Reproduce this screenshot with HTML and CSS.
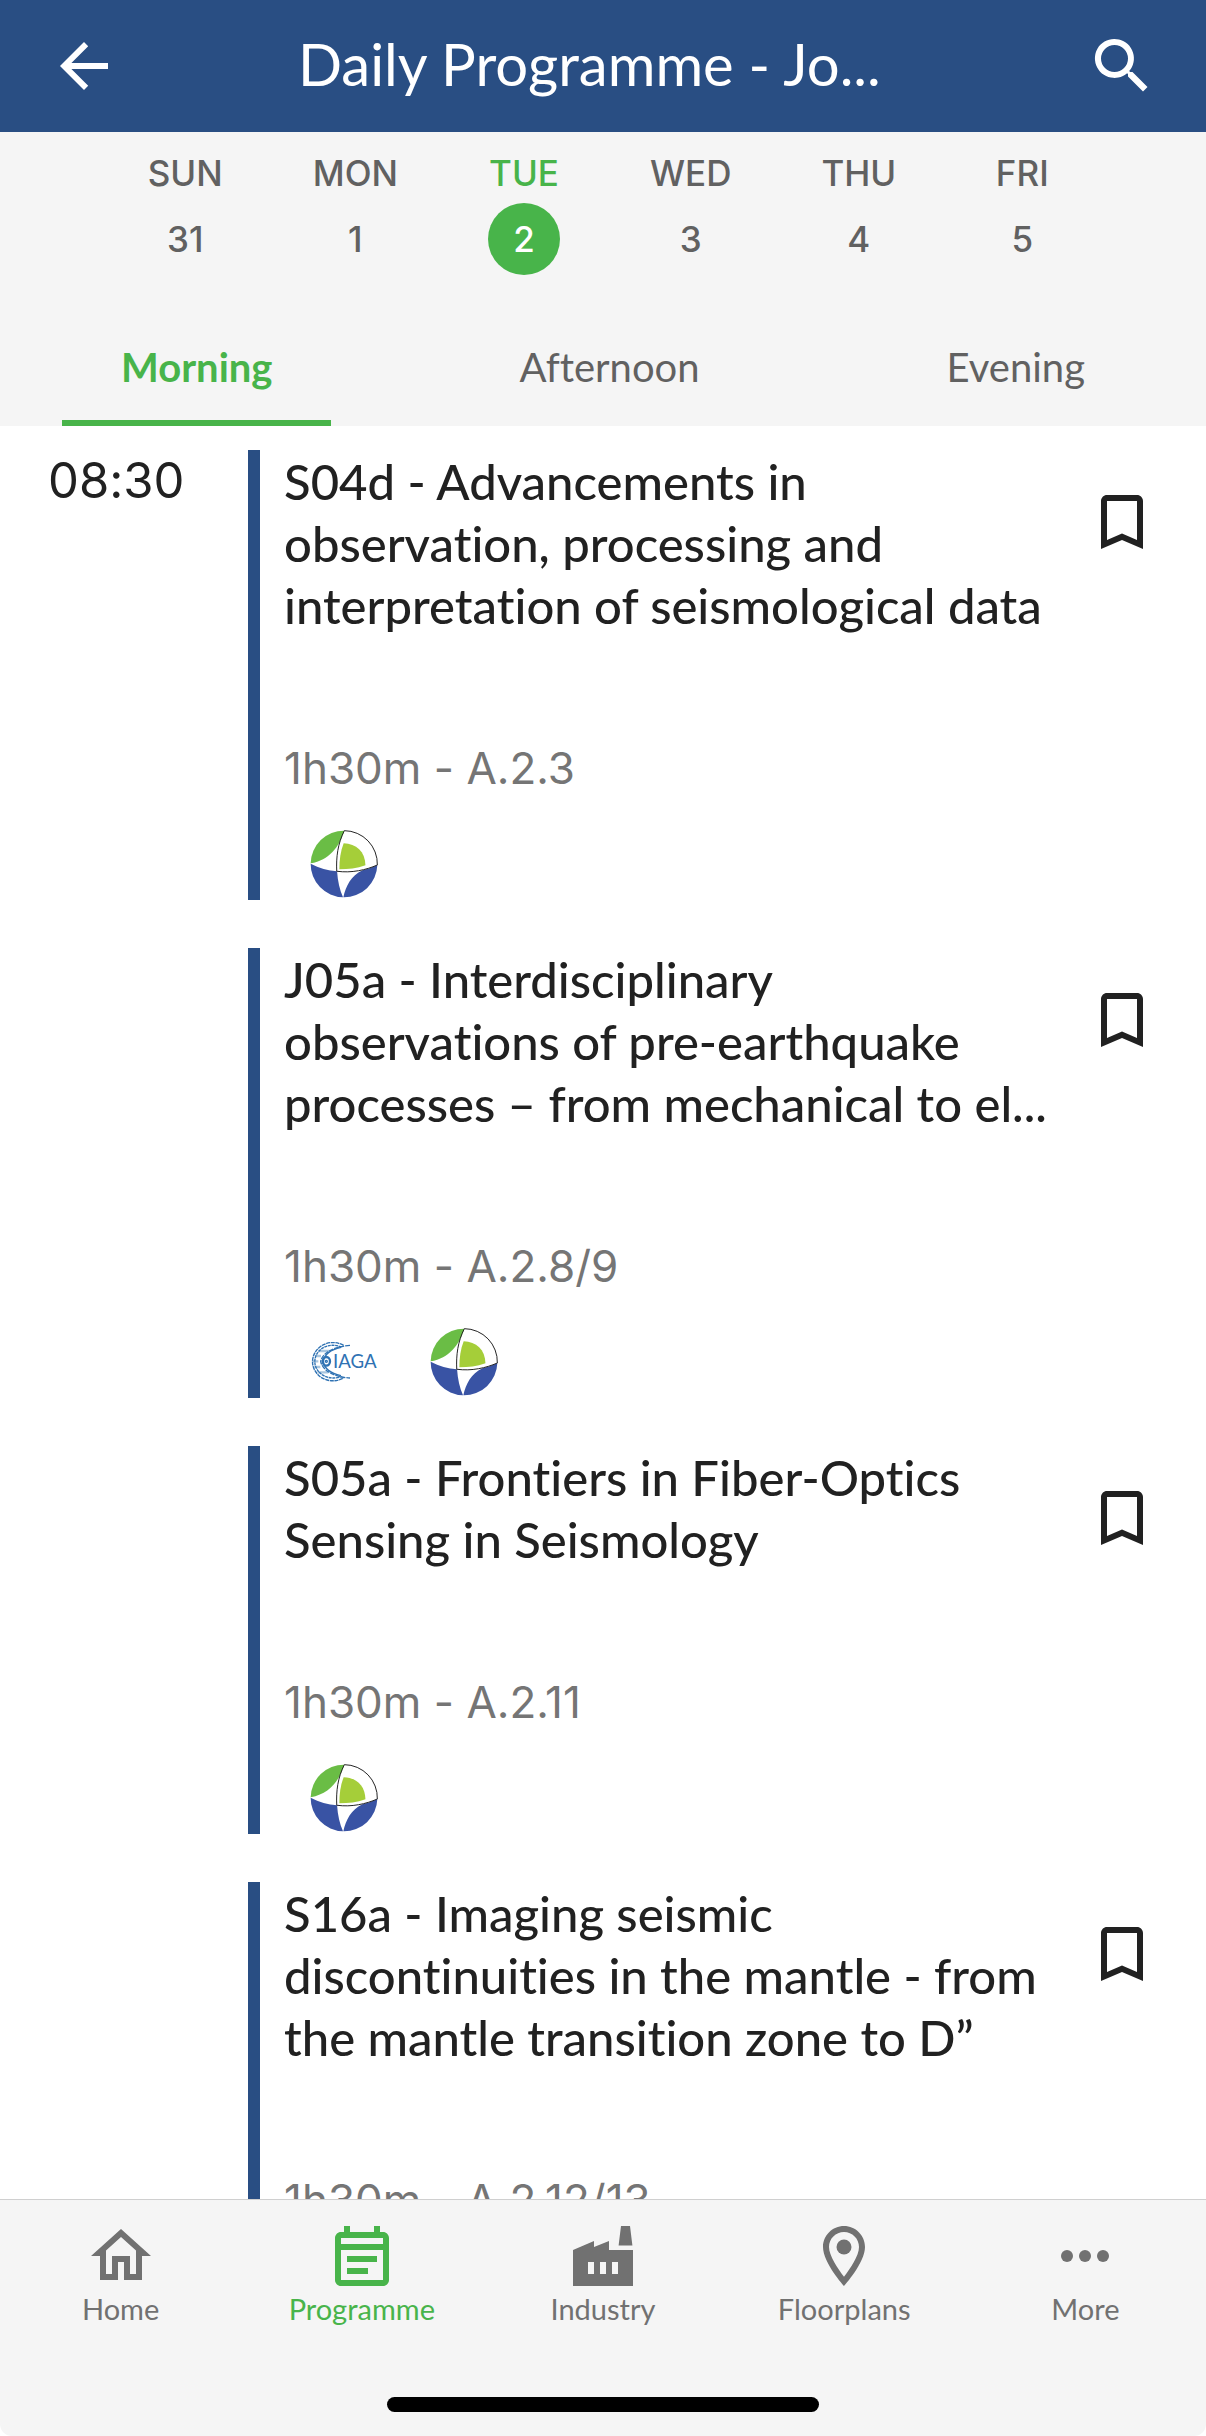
FILE: index.html
```
<!DOCTYPE html>
<html lang="en">
<head>
    <meta charset="UTF-8">
    <meta name="viewport" content="width=device-width, initial-scale=1">
    <title>Daily Programme</title>
    <link rel="stylesheet" href="styles.css">
</head>
<body>
    <!-- shared shapes -->
    <svg class="defs" aria-hidden="true">
        <symbol id="bookmark" viewBox="0 0 24 24">
            <path d="M17 3H7c-1.1 0-2 .9-2 2v16l7-3 7 3V5c0-1.1-.9-2-2-2zm0 15l-5-2.2L7 18V5h10v13z"/>
        </symbol>
        <symbol id="globe" viewBox="31 29 204 206">
            <circle cx="133" cy="132" r="101" fill="#fff"/>
            <path fill="#6abd45" d="M134 31A101 101 0 0 0 32 130C88 119 118 82 134 31z"/>
            <path fill="#a5ce39" d="M132 69C170 70 197 94 198 136C172 146 146 148 119 148C119 120 122 94 132 69z"/>
            <path fill="#3953a4" d="M32 131C58 145 84 151 112 154C114 184 120 210 130 233A101 101 0 0 1 32 131z"/>
            <path fill="#3953a4" d="M234 135C216 143 204 147 189 151C154 168 139 198 131 233A101 101 0 0 0 234 135z"/>
            <path fill="none" stroke="#222" stroke-width="3" d="M134 31C114 70 109 112 111 154C156 160 200 150 234 135A101 101 0 0 0 134 31"/>
        </symbol>
    </svg>

    <header class="header">
        <button class="icon-btn" aria-label="Back">
            <svg viewBox="0 0 24 24"><path d="M20 11H7.8l5.6-5.6L12 4l-8 8 8 8 1.4-1.4L7.8 13H20v-2z"/></svg>
        </button>
        <h1 class="title">Daily Programme - Jo...</h1>
        <button class="icon-btn" aria-label="Search">
            <svg viewBox="0 0 24 24"><path d="M15.5 14h-.8l-.3-.3A6.5 6.5 0 1 0 13.7 14.4l.3.3v.8l5 5 1.5-1.5-5-5zm-6 0a4.5 4.5 0 1 1 0-9 4.5 4.5 0 0 1 0 9z"/></svg>
        </button>
    </header>

    <section class="filters">
        <div class="days">
            <button class="day">SUN<span class="num">31</span></button>
            <button class="day">MON<span class="num">1</span></button>
            <button class="day active">TUE<span class="num">2</span></button>
            <button class="day">WED<span class="num">3</span></button>
            <button class="day">THU<span class="num">4</span></button>
            <button class="day">FRI<span class="num">5</span></button>
        </div>
        <div class="tabs">
            <button class="tab active">Morning</button>
            <button class="tab">Afternoon</button>
            <button class="tab">Evening</button>
        </div>
    </section>

    <main class="list">
        <div class="time">08:30</div>
        <div class="sessions">
            <article class="session">
                <div class="info">
                    <h2 class="name">S04d - Advancements in observation, processing and interpretation of seismological data</h2>
                    <p class="meta">1h30m - A.2.3</p>
                    <div class="logos">
                        <svg><use href="#globe"/></svg>
                    </div>
                </div>
                <button class="save" aria-label="Bookmark"><svg><use href="#bookmark"/></svg></button>
            </article>
            <article class="session">
                <div class="info">
                    <h2 class="name">J05a - Interdisciplinary observations of pre-earthquake processes – from mechanical to el...</h2>
                    <p class="meta">1h30m - A.2.8/9</p>
                    <div class="logos">
                        <svg viewBox="15 -21 204 204">
                            <g fill="none" stroke="#2f72b3" stroke-width="4">
                                <path stroke="#a9c5de" stroke-width="7" d="M40 48h34M30 63h18M24 79h16M28 96h18M38 112h32"/>
                                <path stroke-dasharray="12 2" d="M116 31C92 18 62 20 42 38C16 62 16 98 42 122C62 140 92 142 116 129"/>
                                <path stroke-dasharray="9 2" d="M110 36C78 24 50 34 36 56C26 74 28 92 38 106C54 128 82 134 110 125"/>
                                <path stroke-dasharray="14 3" d="M135 31C86 35 52 54 47 79C52 106 86 126 135 129"/>
                                <path d="M108 37C78 44 58 58 55 79C58 102 78 115 108 122"/>
                                <ellipse cx="64" cy="79" rx="11" ry="13" stroke-width="7"/>
                                <circle cx="64" cy="79" r="3"/>
                            </g>
                            <text class="iaga" x="84" y="99">IAGA</text>
                        </svg>
                        <svg><use href="#globe"/></svg>
                    </div>
                </div>
                <button class="save" aria-label="Bookmark"><svg><use href="#bookmark"/></svg></button>
            </article>
            <article class="session">
                <div class="info">
                    <h2 class="name">S05a - Frontiers in Fiber-Optics Sensing in Seismology</h2>
                    <p class="meta">1h30m - A.2.11</p>
                    <div class="logos">
                        <svg><use href="#globe"/></svg>
                    </div>
                </div>
                <button class="save" aria-label="Bookmark"><svg><use href="#bookmark"/></svg></button>
            </article>
            <article class="session">
                <div class="info">
                    <h2 class="name">S16a - Imaging seismic discontinuities in the mantle - from the mantle transition zone to D”</h2>
                    <p class="meta">1h30m - A.2.12/13</p>
                    <div class="logos">
                        <svg><use href="#globe"/></svg>
                    </div>
                </div>
                <button class="save" aria-label="Bookmark"><svg><use href="#bookmark"/></svg></button>
            </article>
        </div>
    </main>

    <footer class="bottom">
        <nav class="nav">
            <a href="#" class="nav-item">
                <svg viewBox="0 0 24 24"><path d="M12 5.7l5 4.5V18h-2v-6H9v6H7v-7.8l5-4.5M12 3L2 12h3v8h6v-6h2v6h6v-8h3L12 3z"/></svg>
                Home
            </a>
            <a href="#" class="nav-item active">
                <svg viewBox="0 0 24 24"><path fill-rule="evenodd" d="M6 2h2v2h8V2h2v2h1c1.1 0 2 .9 2 2v14c0 1.1-.9 2-2 2H5c-1.1 0-2-.9-2-2V6c0-1.1.9-2 2-2h1zM5 6v2h14V6zM5 10v10h14V10zM7 12h10v2H7zM7 16h7v2H7z"/></svg>
                Programme
            </a>
            <a href="#" class="nav-item">
                <svg viewBox="0 0 24 24"><path d="M22 22H2V10l7-3v2l5-2v3h8v12zM17.2 8.5L18 2h3l.8 6.5h-4.6zM11 18h2v-4h-2v4zm-4 0h2v-4H7v4zm10-4h-2v4h2v-4z"/></svg>
                Industry
            </a>
            <a href="#" class="nav-item">
                <svg viewBox="0 0 24 24"><path d="M12 2C8.13 2 5 5.13 5 9c0 5.25 7 13 7 13s7-7.75 7-13c0-3.87-3.13-7-7-7zM7 9c0-2.76 2.24-5 5-5s5 2.24 5 5c0 2.88-2.88 7.19-5 9.88C9.92 16.21 7 11.85 7 9z"/><circle cx="12" cy="9" r="2.5"/></svg>
                Floorplans
            </a>
            <a href="#" class="nav-item">
                <svg viewBox="0 0 24 24"><circle cx="6" cy="12" r="2"/><circle cx="12" cy="12" r="2"/><circle cx="18" cy="12" r="2"/></svg>
                More
            </a>
        </nav>
        <div class="home-bar"></div>
    </footer>
</body>
</html>
```
FILE: styles.css
```
* {
    box-sizing: border-box;
}
body {
    margin: 0;
    height: 100vh;
    display: flex;
    flex-direction: column;
    background-color: #fff;
    color: #212121;
    font-family: Lato, "Open Sans", sans-serif;
    font-variant-ligatures: none;
}
h1, h2, p {
    margin: 0;
}
button {
    border: none;
    padding: 0;
    background: none;
    color: inherit;
    font: inherit;
}
svg {
    display: block;
    fill: currentColor;
}
.defs {
    position: absolute;
    width: 0;
    height: 0;
}

/* top bar */
.header {
    display: flex;
    align-items: center;
    padding: 30px 48px;
    background-color: #294e83;
    color: #fff;
}
.icon-btn svg,
.save svg,
.nav-item svg {
    width: 72px;
    height: 72px;
}
.title {
    flex: 1;
    padding: 0 0 4px 178px;
    font-size: 58px;
    font-weight: 400;
    line-height: 68px;
    white-space: nowrap;
}

/* day and time of day */
.filters {
    padding-top: 19px;
    background-color: #f5f5f5;
    color: #616161;
}
.days {
    display: flex;
    justify-content: center;
    gap: 90px;
    font-family: Inter, sans-serif;
    font-size: 35px;
    font-weight: 500;
    line-height: 44px;
}
.day {
    display: flex;
    flex-direction: column;
    align-items: center;
    gap: 8px;
    min-width: 72px;
}
.num {
    width: 72px;
    border-radius: 50%;
    line-height: 72px;
}
.active {
    color: #48b44a;
}
.day.active .num {
    background-color: #48b44a;
    color: #fff;
}
.tabs {
    display: flex;
    justify-content: space-between;
    padding: 68px 62px 0;
    font-size: 40px;
    line-height: 48px;
}
.tab {
    padding: 0 59px 29px;
    border-bottom: 6px solid transparent;
}
.tab.active {
    border-color: #48b44a;
    font-weight: 700;
}

/* sessions */
.list {
    flex: 1;
    min-height: 0;
    overflow: hidden;
    display: flex;
    padding-top: 24px;
}
.time {
    width: 248px;
    padding-left: 48px;
    font-family: Inter, sans-serif;
    font-size: 49px;
    line-height: 62px;
}
.sessions {
    flex: 1;
    display: flex;
    flex-direction: column;
    gap: 48px;
}
.session {
    display: flex;
    align-items: flex-start;
    padding-right: 48px;
    border-left: 12px solid #294e83;
}
.info {
    flex: 1;
    padding: 0 32px 2px 24px;
}
.name {
    font-size: 49px;
    font-weight: 500;
    line-height: 62px;
}
.meta {
    margin-top: 105px;
    color: #757575;
    font-family: Inter, sans-serif;
    font-size: 44px;
    line-height: 54px;
}
.logos {
    display: flex;
    gap: 52px;
    padding: 35px 26px 0;
}
.logos svg {
    width: 68px;
    height: 68px;
}
.iaga {
    fill: #2f72b3;
    font-size: 56px;
}
.save {
    margin-top: 36px;
}

/* bottom bar */
.bottom {
    padding: 20px 0 24px;
    border-top: 1px solid #d0d0d0;
    border-radius: 0 0 12px 12px;
    background-color: #f5f5f5;
}
.nav {
    display: flex;
}
.nav-item {
    flex: 1;
    display: flex;
    flex-direction: column;
    align-items: center;
    font-size: 29px;
    line-height: 34px;
    text-decoration: none;
}
.nav-item:not(.active) {
    color: #717171;
}
.home-bar {
    width: 432px;
    height: 15px;
    margin: 71px auto 0;
    border-radius: 8px;
    background-color: #000;
}
```
